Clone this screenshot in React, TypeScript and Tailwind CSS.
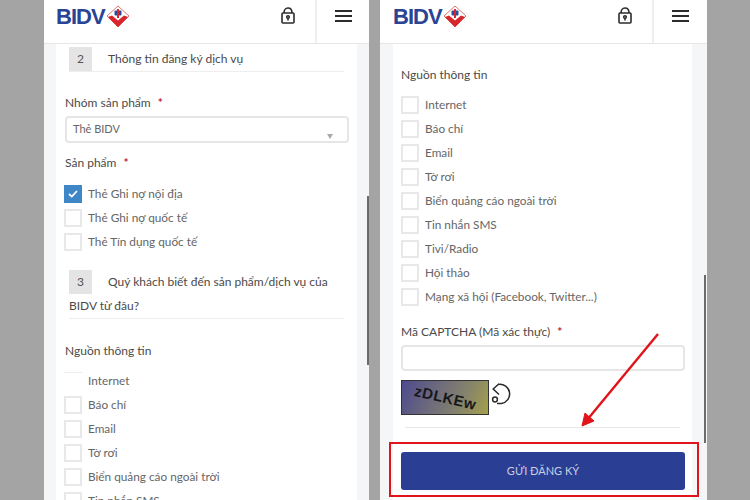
function LockIcon() {
  return (
    <svg width="14" height="17" viewBox="0 0 14 17" fill="none" stroke="#2b2b2b" strokeWidth="1.6">
      <rect x="1" y="6" width="12" height="10" rx="1" />
      <path d="M3 6C3 3 4.5 1 7 1S11 3 11 6" />
      <circle cx="7" cy="10" r="1.3" />
      <path d="M7 11.3V13.5" />
    </svg>
  )
}

function BidvMark() {
  return (
    <svg width="24" height="23" viewBox="0 0 24 23" className="ml-[1px] shrink-0">
      <path d="M12 1 L23 11 L12 22 L1 11 Z" fill="none" stroke="#e0766f" strokeWidth="1" />
      <path d="M2 12 L6 10.5 L12 15.5 L18 10.5 L22 12 L12 22 Z" fill="#d8262c" />
      <rect x="8.5" y="5.5" width="7" height="5" rx="1" fill="#2b4c9b" />
      <rect x="11" y="4" width="2" height="9" fill="#d8262c" />
    </svg>
  )
}

function Header({ logoGap, cell }: { logoGap: string; cell: string }) {
  return (
    <div className="h-[44px] bg-white border-b border-[#e6e6e6] flex items-stretch">
      <div className={`flex items-center pb-[10px] ${logoGap}`}>
        <span className="font-['Liberation_Sans',sans-serif] font-bold text-[22px] tracking-[-1px] text-[#2a4494]">
          BIDV
        </span>
        <BidvMark />
      </div>
      <div className="ml-auto flex items-center mr-[20px] mb-[13px]">
        <LockIcon />
      </div>
      <div className={`${cell} border-l-2 border-[#eeeeee] flex items-center justify-center pb-[12px]`}>
        <div className="w-[17px] flex flex-col gap-[3px]">
          <div className="h-[2px] bg-[#2b2b2b]" />
          <div className="h-[2px] bg-[#2b2b2b]" />
          <div className="h-[2px] bg-[#2b2b2b]" />
        </div>
      </div>
    </div>
  )
}

function Label({ text, required, className }: { text: string; required?: boolean; className: string }) {
  return (
    <div className={`h-[20px] leading-[20px] text-[12px] text-[#4a4a4a] ${className}`}>
      {text}
      {required && <span className="ml-[7px] text-[#c0272d] font-bold">*</span>}
    </div>
  )
}

function CheckRow({ text, checked, hidden }: { text: string; checked?: boolean; hidden?: boolean }) {
  let box = "border-2 border-[#e8e8e8] bg-white"
  if (checked) box = "bg-[#3f86c6] border-2 border-[#3f86c6]"
  if (hidden) box = "border-t border-[#ececec]"
  return (
    <div className="h-[24px] flex items-center">
      <div className={`w-[18px] h-[18px] flex items-center justify-center ${box}`}>
        {checked && (
          <svg width="10" height="8" viewBox="0 0 10 8" fill="none" stroke="#ffffff" strokeWidth="1.8">
            <path d="M1 4L3.8 6.6L9 1" />
          </svg>
        )}
      </div>
      <span className="ml-[6px] text-[11.8px] text-[#666666]">{text}</span>
    </div>
  )
}

function LeftPhone() {
  return (
    <div className="relative w-[325px] shrink-0 bg-[#f5f6f8] overflow-hidden">
      <Header logoGap="pl-[12px]" cell="w-[54px]" />
      <div className="ml-[12px] w-[301px] h-[456px] bg-white px-[13px] overflow-hidden">
        <div className="mt-[3px] w-[275px] flex items-center border-b border-[#eeeeee] h-[25px]">
          <div className="w-[23px] h-[24px] bg-[#e4e4e4] flex items-center justify-center text-[12px] text-[#555555]">
            2
          </div>
          <span className="ml-[16px] text-[12px] text-[#4a4a4a]">Thông tin đăng ký dịch vụ</span>
        </div>
        <div className="-ml-[4px]">
          <Label text="Nhóm sản phẩm" required className="mt-[21px]" />
          <div className="relative mt-[3px] w-[284px] h-[27px] border-2 border-[#e6e6e6] rounded-[4px] flex items-center pl-[6px] text-[11px] text-[#666666]">
            Thẻ BIDV
            <svg width="6" height="5" viewBox="0 0 6 5" className="absolute right-[14px] bottom-[2px]">
              <path d="M0 0H6L3 5Z" fill="#a8a8a8" />
            </svg>
          </div>
          <Label text="Sản phẩm" required className="mt-[10px]" />
          <div className="mt-[9px] -ml-[1px]">
            <CheckRow text="Thẻ Ghi nợ nội địa" checked />
            <CheckRow text="Thẻ Ghi nợ quốc tế" />
            <CheckRow text="Thẻ Tín dụng quốc tế" />
          </div>
        </div>
        <div className="mt-[16px] w-[275px] border-b border-[#eeeeee] text-[12px] leading-[24px] text-[#4a4a4a]">
          <div className="float-left w-[23px] h-[24px] mr-[16px] bg-[#e4e4e4] flex items-center justify-center text-[12px] text-[#555555]">
            3
          </div>
          Quý khách biết đến sản phẩm/dịch vụ của
          <br />
          BIDV từ đâu?
        </div>
        <div className="-ml-[4px]">
          <Label text="Nguồn thông tin" className="mt-[22px]" />
          <div className="mt-[8px] -ml-[1px]">
            <CheckRow text="Internet" hidden />
            <CheckRow text="Báo chí" />
            <CheckRow text="Email" />
            <CheckRow text="Tờ rơi" />
            <CheckRow text="Biển quảng cáo ngoài trời" />
            <CheckRow text="Tin nhắn SMS" />
          </div>
        </div>
      </div>
      <div className="absolute right-0 top-[196px] w-[2px] h-[169px] bg-[#6b6b6b]" />
    </div>
  )
}

const sources = [
  "Internet",
  "Báo chí",
  "Email",
  "Tờ rơi",
  "Biển quảng cáo ngoài trời",
  "Tin nhắn SMS",
  "Tivi/Radio",
  "Hội thảo",
  "Mạng xã hội (Facebook, Twitter...)"
]

function Captcha() {
  return (
    <div className="mt-[9px] flex items-start">
      <div className="w-[88px] h-[35px] border border-[#333333] bg-[linear-gradient(115deg,#4c4a8c_0%,#6f6c7c_40%,#86846a_70%,#a5a04c_100%)] flex items-center justify-center font-['Liberation_Sans',sans-serif] font-bold text-[15px] tracking-[0.5px] leading-none text-[#17171c]">
        <span className="inline-block rotate-[13deg]">zDLKEw</span>
      </div>
      <svg width="22" height="22" viewBox="0 0 22 22" fill="none" stroke="#2b2b2b" strokeWidth="1.5" className="ml-[2px] mt-[3px]">
        <path d="M8 0.8L2.2 6L8 11.5" />
        <path d="M7.5 1.5A9.5 9.5 0 1 1 10.5 20.5H6" />
        <circle cx="4" cy="16.5" r="2.4" />
      </svg>
    </div>
  )
}

function RightPhone() {
  return (
    <div className="relative w-[327px] shrink-0 bg-[#f5f6f8] overflow-hidden">
      <Header logoGap="pl-[13px]" cell="w-[55px]" />
      <div className="ml-[13px] w-[299px] h-[456px] bg-white pl-[8px] overflow-hidden">
        <Label text="Nguồn thông tin" className="mt-[21px]" />
        <div className="mt-[8px]">
          {sources.map((source, index) => (
            <CheckRow key={index} text={source} />
          ))}
        </div>
        <Label text="Mã CAPTCHA (Mã xác thực)" required className="mt-[13px]" />
        <div className="mt-[3px] w-[284px] h-[26px] border-2 border-[#e6e6e6] rounded-[4px]" />
        <Captcha />
        <div className="mt-[12px] ml-[4px] w-[275px] h-[1px] bg-[#e8e8e8]" />
        <div className="mt-[24px] w-[284px] h-[38px] rounded-[3px] bg-[#2a3f94] flex items-center justify-center text-[11px] text-[#c9cee3]">
          GỬI ĐĂNG KÝ
        </div>
      </div>
      <div className="absolute right-[1px] top-[275px] w-[2px] h-[168px] bg-[#6b6b6b]" />
    </div>
  )
}

export default function App() {
  return (
    <div className="relative h-[500px] w-[750px] overflow-hidden bg-[#a4a4a4] pl-[44px] flex gap-[11px] font-['Lato',sans-serif]">
      <LeftPhone />
      <RightPhone />
      <div className="absolute left-[389px] top-[442px] w-[310px] h-[55px] border-2 border-[#e0141a]" />
      <svg width="750" height="500" className="absolute left-0 top-0 pointer-events-none">
        <path d="M658 334L587 420" stroke="#e0141a" strokeWidth="2.4" />
        <path d="M582 426L585 413L594 421Z" fill="#e0141a" stroke="#e0141a" />
      </svg>
    </div>
  )
}
